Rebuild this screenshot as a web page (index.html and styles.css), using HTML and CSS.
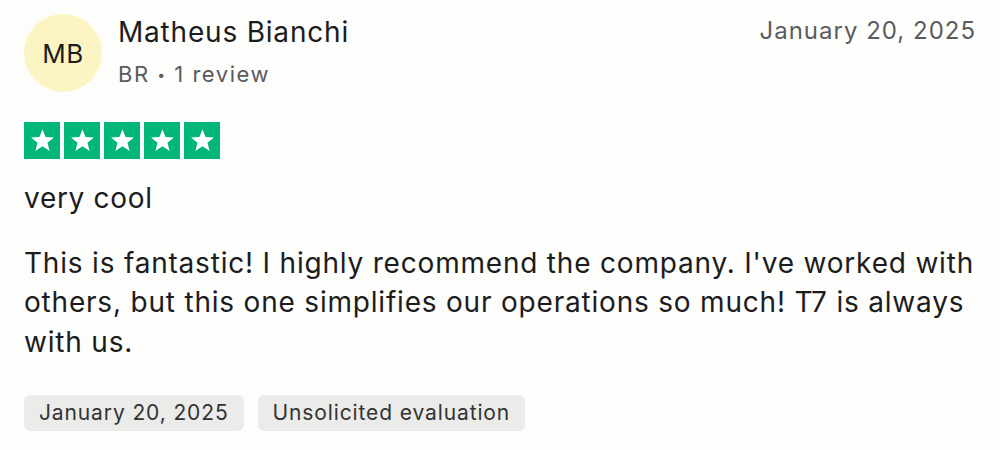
FILE: index.html
```html
<!DOCTYPE html>
<html lang="en">
<head>
<meta charset="utf-8">
<title>Review</title>
<link rel="stylesheet" href="styles.css">
</head>
<body>
<article class="review">
  <header class="review-header">
    <div class="avatar">MB</div>
    <div class="consumer">
      <div class="consumer-name">Matheus Bianchi</div>
      <div class="consumer-meta">BR <span class="dot">•</span> 1 review</div>
    </div>
    <time class="review-date">January 20, 2025</time>
  </header>
  <div class="stars" aria-label="Rated 5 out of 5">
    <span class="star"><svg viewBox="0 0 24 24"><path d="M12 3.2l2.35 6.1 6.55.35-5.08 4.12 1.7 6.33L12 16.5l-5.52 3.6 1.7-6.33L3.1 9.65l6.55-.35z"/></svg></span>
    <span class="star"><svg viewBox="0 0 24 24"><path d="M12 3.2l2.35 6.1 6.55.35-5.08 4.12 1.7 6.33L12 16.5l-5.52 3.6 1.7-6.33L3.1 9.65l6.55-.35z"/></svg></span>
    <span class="star"><svg viewBox="0 0 24 24"><path d="M12 3.2l2.35 6.1 6.55.35-5.08 4.12 1.7 6.33L12 16.5l-5.52 3.6 1.7-6.33L3.1 9.65l6.55-.35z"/></svg></span>
    <span class="star"><svg viewBox="0 0 24 24"><path d="M12 3.2l2.35 6.1 6.55.35-5.08 4.12 1.7 6.33L12 16.5l-5.52 3.6 1.7-6.33L3.1 9.65l6.55-.35z"/></svg></span>
    <span class="star"><svg viewBox="0 0 24 24"><path d="M12 3.2l2.35 6.1 6.55.35-5.08 4.12 1.7 6.33L12 16.5l-5.52 3.6 1.7-6.33L3.1 9.65l6.55-.35z"/></svg></span>
  </div>
  <h2 class="review-title">very cool</h2>
  <p class="review-body">This is fantastic! I highly recommend the company. I've worked with others, but this one simplifies our operations so much! T7 is always with us.</p>
  <div class="tags">
    <span class="tag">January 20, 2025</span>
    <span class="tag">Unsolicited evaluation</span>
  </div>
</article>
</body>
</html>
```
FILE: styles.css
```css
html, body {
  margin: 0;
  padding: 0;
  background: #fdfdfc;
}
body {
  font-family: "Inter", "Liberation Sans", Arial, sans-serif;
  color: #1c1c1c;
}
.review {
  padding: 14px 24px 0 24px;
}
.review-header {
  display: flex;
  align-items: flex-start;
}
.avatar {
  width: 78px;
  height: 78px;
  border-radius: 50%;
  background: #fdf4c3;
  color: #1c1c1c;
  display: flex;
  align-items: center;
  justify-content: center;
  font-size: 26px;
  letter-spacing: 0.5px;
  flex-shrink: 0;
}
.consumer {
  margin-left: 16px;
  flex: 1;
}
.consumer-name {
  font-size: 28px;
  line-height: 36px;
  letter-spacing: 0.8px;
  color: #1c1c1c;
}
.consumer-meta {
  margin-top: 10px;
  font-size: 22px;
  line-height: 28px;
  letter-spacing: 1.5px;
  color: #5a5a5a;
}
.dot {
  font-size: 14px;
  vertical-align: 2px;
}
.review-date {
  font-size: 24px;
  line-height: 33px;
  letter-spacing: 1px;
  color: #5c5c5c;
}
.stars {
  display: flex;
  gap: 4px;
  margin-top: 30px;
}
.star {
  width: 36px;
  height: 37px;
  background: #00b67a;
  display: flex;
  align-items: center;
  justify-content: center;
}
.star svg {
  width: 31px;
  height: 31px;
  fill: #fff;
}
.review-title {
  margin: 21px 0 0 0;
  font-size: 28px;
  line-height: 36px;
  letter-spacing: 0.7px;
  font-weight: 400;
  color: #1c1c1c;
}
.review-body {
  margin: 28px 0 0 0;
  font-size: 28px;
  line-height: 39.4px;
  letter-spacing: 0.8px;
  color: #1c1c1c;
}
.tags {
  display: flex;
  gap: 14px;
  margin-top: 33px;
}
.tag {
  background: #ebebe9;
  border-radius: 6px;
  padding: 0 15px;
  height: 36px;
  line-height: 36px;
  font-size: 21px;
  letter-spacing: 0.88px;
  color: #333;
}
```
